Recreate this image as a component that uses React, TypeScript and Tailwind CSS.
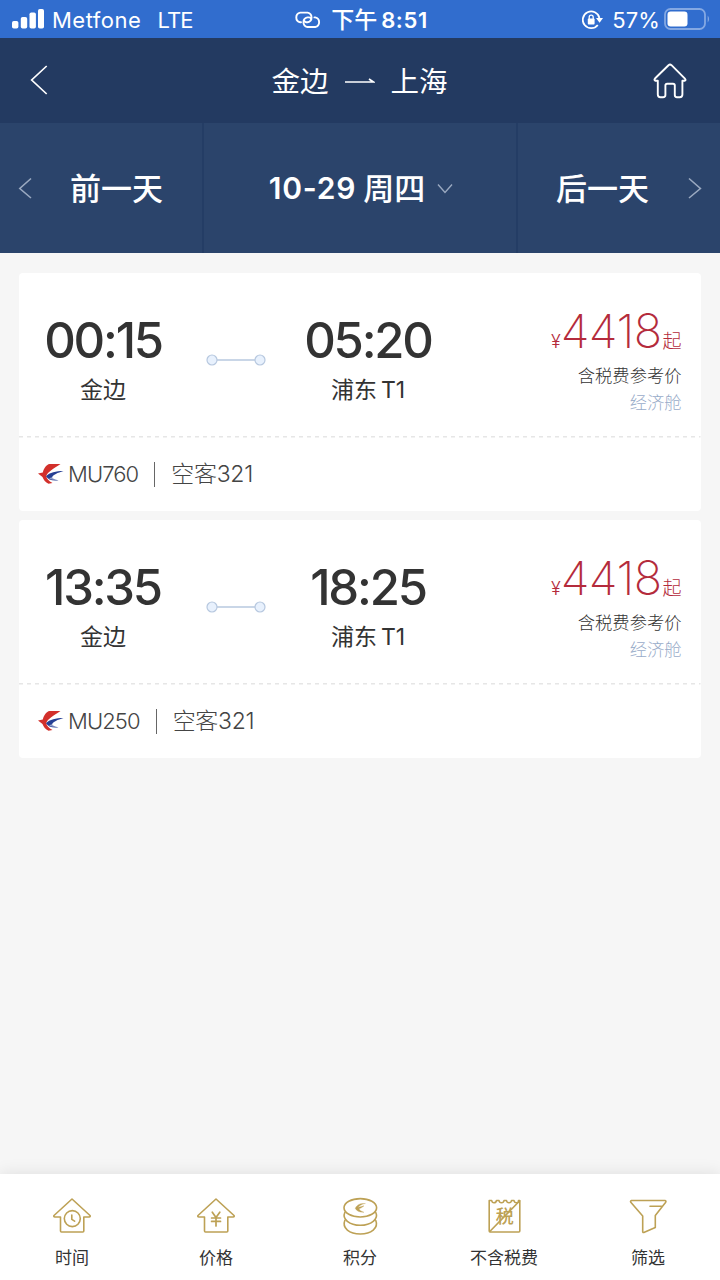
import type { ReactNode } from 'react';

interface Flight {
  id: string;
  departTime: string;
  departCity: string;
  arriveTime: string;
  arriveAirport: string;
  terminal: string;
  price: number;
  aircraft: string;
}

const flights: Flight[] = [
  {
    id: 'MU760',
    departTime: '00:15',
    departCity: '金边',
    arriveTime: '05:20',
    arriveAirport: '浦东',
    terminal: 'T1',
    price: 4418,
    aircraft: '空客321',
  },
  {
    id: 'MU250',
    departTime: '13:35',
    departCity: '金边',
    arriveTime: '18:25',
    arriveAirport: '浦东',
    terminal: 'T1',
    price: 4418,
    aircraft: '空客321',
  },
];

function StatusBar() {
  return (
    <div className="grid h-[38px] grid-cols-3 items-center bg-[#316dce] pt-px text-[22px] leading-none text-white">
      <div className="flex items-center pl-3">
        <svg className="mb-0.5 h-5 w-8" viewBox="0 0 32 20" fill="currentColor">
          <rect x="0" y="12" width="6.4" height="7.5" rx="1.8" />
          <rect x="8.8" y="8" width="6.4" height="11.5" rx="1.8" />
          <rect x="17.5" y="3.5" width="6.4" height="16" rx="1.8" />
          <rect x="26" y="0" width="6" height="19.5" rx="1.8" />
        </svg>
        <span className="ml-2 tracking-[0.5px]">Metfone</span>
        <span className="ml-[16px] tracking-[-0.8px]">LTE</span>
      </div>
      <div className="flex items-center justify-center pl-0.5 font-semibold whitespace-nowrap">
        <svg className="mr-[9px] h-[18px] w-[28px]" viewBox="0 0 28 18" fill="none" stroke="currentColor" strokeWidth="1.9" strokeLinecap="round">
          <path d="M7 11.2H6.2A4.9 4.9 0 0 1 6.2 1.6H13.6A4.9 4.9 0 0 1 13.6 11.2H12.2A2.5 2.5 0 0 1 10.2 9.6" />
          <path d="M20.4 6.4H21.2A4.9 4.9 0 0 1 21.2 16H13.4A4.9 4.9 0 0 1 13.4 6.4H15A2.5 2.5 0 0 1 17.2 8" />
        </svg>
        <span className="pt-px text-[23px] font-medium">下午</span>
        <span className="ml-1 tracking-[0.6px]">8:51</span>
      </div>
      <div className="flex items-center justify-end pr-[10px]">
        <svg className="mr-[9px] h-5 w-[21px]" viewBox="0 0 21 20" fill="none" stroke="currentColor" strokeWidth="1.8">
          <path d="M17.4 8A8.4 8.4 0 1 0 15.8 15" />
          <path d="M14 8H21L17.6 12.8Z" fill="currentColor" stroke="none" />
          <rect x="5.8" y="8.6" width="6.8" height="5.8" rx="0.9" fill="currentColor" stroke="none" />
          <path d="M7.2 9V7.2A2 2 0 0 1 11.2 7.2V9" strokeWidth="1.3" />
        </svg>
        <span className="tracking-[0.1px]">57%</span>
        <svg className="mb-0.5 ml-1 h-[22px] w-[46px]" viewBox="0 0 46 22" fill="none">
          <rect x="1" y="1" width="40" height="20" rx="5.5" stroke="#84a8e3" strokeWidth="1.8" />
          <rect x="3.5" y="3.6" width="20" height="14.8" rx="3.2" fill="#fff" />
          <path d="M43.7 7.5Q46.5 11 43.7 14.5Z" fill="#84a8e3" />
        </svg>
      </div>
    </div>
  );
}

function Header() {
  return (
    <div className="flex h-[85px] items-center justify-between bg-[#233a61] pr-[33px] pl-[30px] text-white">
      <svg className="mb-0.5 h-[30px] w-[36px]" viewBox="0 0 36 30" fill="none" stroke="currentColor" strokeWidth="1.7">
        <path d="M16.7 1L1.7 15L16.7 29" />
      </svg>
      <div className="flex items-center pt-1 text-[28.5px] leading-none">
        <span>金边</span>
        <svg className="mx-4 mb-1 h-3 w-[30px]" viewBox="0 0 30 12" fill="none" stroke="currentColor" strokeWidth="1.7">
          <path d="M0 7H28.5L24 4" />
        </svg>
        <span>上海</span>
      </div>
      <svg className="h-[36px] w-[34px]" viewBox="0 0 34 36" fill="none" stroke="currentColor" strokeWidth="1.9" strokeLinejoin="round">
        <path d="M15.5 2.2Q17 1 18.5 2.2L31.7 15.3Q33.5 17.3 31.6 17.8H29.4V31.5Q29.4 34.2 26.7 34.2H24Q21.8 34.2 21.8 32V22.5Q21.8 20.8 20 20.8H14.2Q12.4 20.8 12.4 22.5V32Q12.4 34.2 10 34.2H7.4Q4.8 34.2 4.8 31.5V17.8H2.5Q.6 17.3 2.2 15.3Z" />
      </svg>
    </div>
  );
}

function DayBar() {
  return (
    <div className="flex h-[130px] bg-[#2b446b] text-[31px] leading-none font-medium text-white">
      <button className="flex w-[204px] items-center border-r-2 border-[#243d65] pl-[18px]">
        <svg className="h-[22px] w-[14px]" viewBox="0 0 14 22" fill="none" stroke="#9aa9c0" strokeWidth="1.6">
          <path d="M13 1.5L1.8 11.5L13 21" />
        </svg>
        <span className="ml-[38px]">前一天</span>
      </button>
      <button className="flex w-[314px] items-center justify-center border-r-2 border-[#243d65] pl-0.5">
        <span className="text-[30px] font-semibold tracking-[0.8px]">10-29</span>
        <span className="ml-[7px]">周四</span>
        <svg className="ml-3 h-[11px] w-4" viewBox="0 0 16 11" fill="none" stroke="#9aa9c0" strokeWidth="1.4">
          <path d="M1 1.5L8 9.5L15 1.5" />
        </svg>
      </button>
      <button className="flex flex-1 items-center justify-end pr-[18px]">
        <span className="mr-[39px]">后一天</span>
        <svg className="h-[22px] w-[14px]" viewBox="0 0 14 22" fill="none" stroke="#9aa9c0" strokeWidth="1.6">
          <path d="M1 1.5L12.4 11.5L1 21" />
        </svg>
      </button>
    </div>
  );
}

function AirlineLogo() {
  return (
    <svg className="h-5 w-[26px]" viewBox="0 0 26 20">
      <path d="M22.5 0H11.5C8.5 .5 6 4 4.8 8.5L0 9.5L4.5 13C5.5 15.8 7.5 18.5 10.5 19.8L14.5 19C10.8 17 8.5 14.8 8.3 12C9.5 8 15.5 4.5 22.5 0Z" fill="#d2302b" />
      <path d="M25.5 7C18 7 11.5 8.5 8 12.2C10 15.4 14 17.3 20.5 16.3C17 15.6 14.6 14.5 14 13.3C15 10.8 19.5 8.8 25.5 7Z" fill="#263f94" />
      <path d="M11 14.2C13.5 15.8 16 16.2 20 15.6C17 14.8 15 14 14 13.3Z" fill="#fff" fillOpacity="0.5" />
    </svg>
  );
}

function FlightCard({ flight }: { flight: Flight }) {
  return (
    <div className="h-[237.5px] rounded bg-white text-[#333]">
      <div className="flex h-[162.5px]">
        <div className="flex w-[168px] flex-col items-center pt-[43px]">
          <span className="text-[49px] leading-[50px] font-medium tracking-[-2.2px]">{flight.departTime}</span>
          <span className="mt-[12px] text-[23px] leading-[24px]">{flight.departCity}</span>
        </div>
        <svg className="mt-[80.5px] ml-[18px] h-3 w-[62px]" viewBox="0 0 62 12" fill="#e8f1fd" stroke="#b7c8df" strokeWidth="1.2">
          <path d="M12 6H50" strokeWidth="1.6" />
          <circle cx="7" cy="6" r="5" />
          <circle cx="55" cy="6" r="5" />
        </svg>
        <div className="flex w-[202px] flex-col items-center pt-[43px]">
          <span className="text-[49px] leading-[50px] font-medium tracking-[-2.2px]">{flight.arriveTime}</span>
          <span className="mt-[12px] flex gap-1 text-[23px] leading-[24px]">
            <span>{flight.arriveAirport}</span>
            <span>{flight.terminal}</span>
          </span>
        </div>
        <div className="flex flex-1 flex-col items-end pt-[34px] pr-[19px]">
          <div className="flex items-baseline text-[#b42b3c]">
            <span className="text-[18px] leading-none font-light">¥</span>
            <span className="text-[47px] leading-[48px] font-[250] tracking-[-0.6px]">{flight.price}</span>
            <span className="ml-px text-[19px] leading-none font-light">起</span>
          </div>
          <span className="mt-[10px] text-[17.3px] leading-[22px] font-light">含税费参考价</span>
          <span className="mt-[5px] text-[17.3px] leading-[22px] font-light text-[#99acc9]">经济舱</span>
        </div>
      </div>
      <svg className="block h-0.5 w-full" stroke="#e6e6e6" strokeWidth="1.4">
        <line x1="0" y1="0.7" x2="100%" y2="0.7" strokeDasharray="4 4" />
      </svg>
      <div className="flex h-[73px] items-center pl-[19px] text-[22px] leading-none font-light text-[#444]">
        <AirlineLogo />
        <span className="ml-[4px] tracking-[-0.9px]">{flight.id}</span>
        <span className="mx-[16px] h-[25px] w-px bg-[#666]" />
        <span className="pt-px text-[23px] tracking-[-0.3px]">{flight.aircraft}</span>
      </div>
    </div>
  );
}

function Tab({ label, children }: { label: string; children: ReactNode }) {
  return (
    <button className="flex flex-1 flex-col items-center pt-[22px]">
      <svg className="h-[40px] w-[40px] text-[#bda155]" viewBox="0 0 40 40" fill="none" stroke="currentColor" strokeWidth="1.6" strokeLinejoin="round" strokeLinecap="round">
        {children}
      </svg>
      <span className="mt-[13px] text-[17px] leading-[18px] text-[#333]">{label}</span>
    </button>
  );
}

const housePath = 'M20 3L38 19.5Q38.8 20.8 37 21H31.8V35Q31.8 36 30.8 36H9.5Q8.5 36 8.5 35V21H3Q1.2 20.8 2 19.5Z';

function TabBar() {
  return (
    <div className="flex h-[106px] bg-white shadow-[0_0_16px_rgba(0,0,0,0.1)]">
      <Tab label="时间">
        <path d={housePath} />
        <circle cx="20.3" cy="22.6" r="8" fill="#fff" />
        <path d="M19.8 19V23.3L22.6 25.2" />
      </Tab>
      <Tab label="价格">
        <path d={housePath} />
        <path d="M16.3 16.2L20 21.5L23.8 16.2M20 21.5V30M15.6 22H24.5M15.6 25.4H24.5" strokeWidth="1.7" />
      </Tab>
      <Tab label="积分">
        <ellipse cx="20.3" cy="11.8" rx="16.3" ry="9.2" />
        <path d="M4.8 16.5C1.8 23 9.5 29.3 20.3 29.3S38.8 23 35.8 16.5" />
        <path d="M4.8 24.5C1.8 32 9.5 38 20.3 38S38.8 32 35.8 24.5" />
        <path d="M25 7.5C20 7 17 9 15.2 12.2C16.5 15 19.5 16.5 24 16.3C21 15.2 19.5 14 19 12.7C21 12.2 22.5 11.2 24 9.8C21.5 10.5 19.5 10.9 18 11.4C19.5 9.3 22 8.2 25 7.5Z" fill="currentColor" strokeWidth="0.3" />
      </Tab>
      <Tab label="不含税费">
        <path d="M5.2 4.5H7.7Q8 6.8 10 6.8T12.5 4.5H15Q15.3 6.8 17.5 6.8T20 4.5H22.5Q22.8 6.8 25 6.8T27.5 4.5H30Q30.3 6.8 32.5 6.8T34.5 4.5H35.8V35Q35.8 36 34.8 36H6.2Q5.2 36 5.2 35Z" />
        <text x="20.8" y="26.5" fontSize="18" textAnchor="middle" fill="currentColor" stroke="none" fontWeight="500">
          税
        </text>
        <path d="M5.8 35.5L35.5 5" />
      </Tab>
      <Tab label="筛选">
        <path d="M3.5 4.5H37Q38.6 5 37.5 6.5L27.3 19.5V31.5L15.8 36.5Q14.7 36.7 14.7 35.5V20L2.8 6.3Q2 5 3.5 4.5Z" />
        <path d="M22 10.2H33.5" />
      </Tab>
    </div>
  );
}

export default function App() {
  return (
    <div lang="zh-CN" className="flex h-[1280px] w-[720px] flex-col overflow-hidden bg-[#f6f6f6] font-[Inter,'Noto_Sans_CJK_SC',sans-serif]">
      <StatusBar />
      <Header />
      <DayBar />
      <div className="flex flex-1 flex-col gap-[9.5px] pt-[20px] pr-[19.5px] pl-[19px]">
        {flights.map((flight) => (
          <FlightCard key={flight.id} flight={flight} />
        ))}
      </div>
      <TabBar />
    </div>
  );
}
